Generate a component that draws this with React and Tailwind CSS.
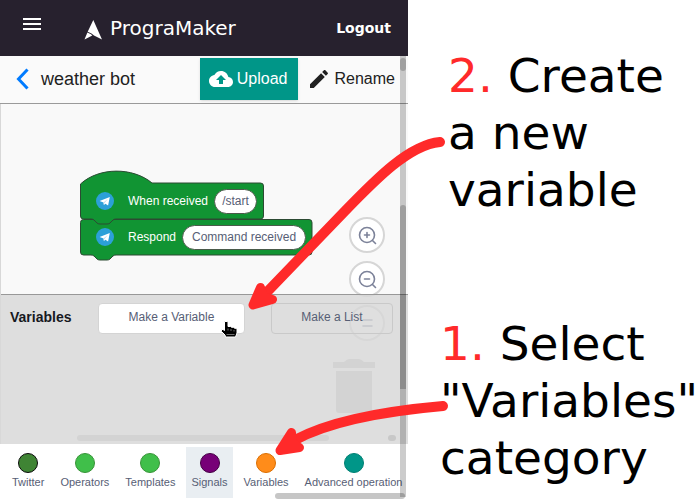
import React from "react";

const SANS = "font-['Liberation_Sans',Arial,sans-serif]";

const categories = [
  { name: "Twitter", dot: "bg-[#3f8434] border-[#0b0b0b]" },
  { name: "Operators", dot: "bg-[#40bf4a] border-[#389438]" },
  { name: "Templates", dot: "bg-[#40bf4a] border-[#389438]" },
  { name: "Signals", dot: "bg-[#770077] border-[#440044]", selected: true },
  { name: "Variables", dot: "bg-[#ff8c1a] border-[#db6e00]" },
  { name: "Advanced operation", dot: "bg-[#009688] border-[#008073]" },
];

function Header() {
  return (
    <header className="flex h-14 shrink-0 items-center bg-[#27212e] pr-[17px] pl-5 font-['DejaVu_Sans',sans-serif] text-white">
      <button aria-label="Menu" className="-mt-2 h-6 w-6">
        <svg viewBox="0 0 24 24" className="h-6 w-6" fill="#fff">
          <path d="M3 6h18v2H3zM3 11h18v2H3zM3 16h18v2H3z" />
        </svg>
      </button>
      <a href="#home" className="ml-10 flex items-center gap-2 text-xl">
        <svg viewBox="0 0 18 20" className="mt-1 h-5 w-[18px]" fill="#fff">
          <path d="M9.300 0 18 19.500 10 15.500 7.500 13.600 3.700 11.800z" />
          <path d="M3.400 12.600 7 14.300 8.300 15.500 0.500 19.600z" />
        </svg>
        PrograMaker
      </a>
      <a href="#logout" className="ml-auto text-sm font-bold">Logout</a>
    </header>
  );
}

function Toolbar() {
  return (
    <div className="flex h-12 shrink-0 items-center border-b border-[#9a9a9a] bg-[#fafafa] pr-[13px] pb-[2px] pl-4 text-[#212121]">
      <button aria-label="Back" className="mr-3 h-6 w-[13px]">
        <svg viewBox="0 0 13 24" className="h-6 w-[13px]" fill="none" stroke="#007bff" strokeWidth="3">
          <path d="M11.500 2.500 2.500 12l9 9.500" />
        </svg>
      </button>
      <h1 className="text-lg">weather bot</h1>
      <button className="ml-auto flex h-[42px] items-center gap-1 bg-[#009688] pr-[10px] pl-[9px] text-base text-white shadow">
        <svg viewBox="0 0 24 24" className="h-6 w-6" fill="#fff">
          <path d="M19.35 10.04C18.67 6.59 15.64 4 12 4 9.11 4 6.6 5.64 5.35 8.04 2.34 8.36 0 10.91 0 14c0 3.31 2.69 6 6 6h13c2.76 0 5-2.24 5-5 0-2.64-2.05-4.78-4.65-4.96zM14 13v4h-4v-4H7l5-5 5 5h-3z" />
        </svg>
        Upload
      </button>
      <button className="ml-[9px] flex h-[42px] items-center gap-1 text-base">
        <svg viewBox="0 0 24 24" className="h-6 w-6" fill="#212121">
          <path d="M3 17.25V21h3.75L17.81 9.94l-3.75-3.75L3 17.25zM20.71 7.04c.39-.39.39-1.02 0-1.41l-2.34-2.34c-.39-.39-1.02-.39-1.41 0l-1.83 1.83 3.75 3.75 1.83-1.83z" />
        </svg>
        Rename
      </button>
    </div>
  );
}

function TelegramIcon() {
  return (
    <svg viewBox="0 0 18 18" className="h-[18px] w-[18px] shrink-0">
      <circle cx="9" cy="9" r="9" fill="#2ca0d8" />
      <path d="M3.6 9 13.8 5 12.1 13.6 9.4 11.7 7.9 13.1 7.5 10.6z" fill="#fff" />
      <path d="M7.5 10.6 12.2 6.6 8.2 11.2 7.9 13.1z" fill="#b8d8ea" />
    </svg>
  );
}

function Block({ label, value, inputWidth }) {
  return (
    <label className="flex h-9 items-center pl-4 text-xs text-white">
      <TelegramIcon />
      <span className="mr-[6px] ml-[14px] whitespace-nowrap">{label}</span>
      <input
        defaultValue={value}
        className={`h-[25px] rounded-full border border-[#4a5a4a] bg-white text-center text-xs text-[#575e75] ${inputWidth}`}
      />
    </label>
  );
}

function Program() {
  return (
    <div className="absolute top-[66px] left-[80px] w-[233px]">
      <svg viewBox="0 0 233 92" className="absolute top-0 left-0 h-[92px] w-[233px]" fill="#119433" stroke="#2c4a33">
        <path d="M.5 52.500a3 3 0 0 1 3-3H229a3 3 0 0 1 3 3V82a3 3 0 0 1-3 3H36q-2 0-3 1l-3 3q-1 1-3 1H20q-2 0-3-1l-3-3q-1-1-3-1H3.500a3 3 0 0 1-3-3z" />
        <path d="M.5 14C19-3 53-3 72 13H180.500a3 3 0 0 1 3 3V46a3 3 0 0 1-3 3H36q-2 0-3 1l-3 3q-1 1-3 1H20q-2 0-3-1l-3-3q-1-1-3-1H3.500a3 3 0 0 1-3-3z" />
      </svg>
      <div className="relative pt-[13px]">
        <Block label="When received" value="/start" inputWidth="w-[43px]" />
        <Block label="Respond" value="Command received" inputWidth="w-[124px]" />
      </div>
    </div>
  );
}

function ZoomButton({ label, children }) {
  return (
    <button aria-label={label} className="h-9 w-9 rounded-full border-2 border-[#d6d6d6] bg-white">
      <svg viewBox="0 0 32 32" className="h-8 w-8" fill="none" stroke="#7c8299" strokeWidth="1.600" strokeLinecap="round">
        {children}
      </svg>
    </button>
  );
}

function CanvasControls() {
  return (
    <div className="absolute top-[113px] right-[23px] flex flex-col items-end gap-2">
      <ZoomButton label="Zoom in">
        <circle cx="16" cy="16" r="7.500" />
        <path d="m21.500 21.500 3 3M16 13.500v5M13.500 16h5" />
      </ZoomButton>
      <ZoomButton label="Zoom out">
        <circle cx="16" cy="16" r="7.500" />
        <path d="m21.500 21.500 3 3M13.500 16h5" />
      </ZoomButton>
      <ZoomButton label="Reset zoom">
        <path d="M12 13h9M12 19h9" />
      </ZoomButton>
      <svg viewBox="0 0 42 54" className="mt-[10px] mr-[10px] h-[54px] w-[42px]" fill="#c4c4c4">
        <path d="M0 3h11q3-3 5-3h10q2 0 5 3h11v6H0zM3 12h36v39q0 3-3 3H6q-3 0-3-3z" />
      </svg>
    </div>
  );
}

function HandCursor() {
  return (
    <svg viewBox="0 0 18 18" className="absolute right-[6px] bottom-[-5px] h-[18px] w-[18px]">
      <path d="M5 1.500h2q1 0 1 1V6.500h2.500l1 .8h2l1 1h1.500q1 .3 1 1.300V13l-1.500 4H5.500L5 15 1.500 11.500V9.500H3l1.500 1V2z" fill="#000" stroke="#fff" strokeWidth="1" />
      <path d="M8 8.500v2M11 9v2M14 10v1.500M6.500 14.500h8" stroke="#bbb" strokeWidth=".6" />
    </svg>
  );
}

function VariablesDrawer() {
  return (
    <section className="relative flex h-[150px] shrink-0 items-start border-t border-[#989898] bg-[#d7d7d7]/80 pt-2 pr-[15px] pl-[9px]">
      <h2 className="w-[88px] shrink-0 pt-1 text-sm font-bold text-[#17191f]">Variables</h2>
      <button className="relative h-[31px] min-w-0 flex-[147] rounded-[4px] border border-[#d4d4d4] bg-white pb-[3px] text-xs text-[#575e75]">
        Make a Variable
        <HandCursor />
      </button>
      <button className="ml-[26px] h-[31px] min-w-0 flex-[122] rounded-[4px] border border-[#c9c9c9] pb-[3px] text-xs text-[#575e75]">
        Make a List
      </button>
      <div className="absolute bottom-[3px] left-[76px] h-[6px] w-[252px] rounded-full bg-[#d3d3d3]" />
      <div className="absolute right-3 bottom-[3px] h-[6px] w-2 rounded-full bg-[#c8c8c8]" />
    </section>
  );
}

function CategoryBar() {
  return (
    <nav className="relative flex h-[55px] shrink-0 gap-[6px] overflow-hidden bg-white pt-[3px] pl-[7px]">
      {categories.map((c) => (
        <button
          key={c.name}
          className={`flex h-[51px] shrink-0 flex-col items-center px-[5px] pt-[6px] text-[11px] leading-[14px] whitespace-nowrap text-[#575e75] ${c.selected ? "bg-[#e9eef2]" : ""}`}
        >
          <span className={`mb-[2px] h-5 w-5 rounded-full border ${c.dot}`} />
          {c.name}
        </button>
      ))}
      <div className="absolute right-[3px] bottom-0 h-[6px] w-[130px] rounded-full bg-[#c6c6c6]" />
    </nav>
  );
}

function Scrollbar() {
  return (
    <div aria-hidden="true" className="absolute top-14 right-[2px] bottom-[2px] z-10 w-[6px] bg-black/20">
      <div className="absolute top-[2px] h-[13px] w-full rounded-full bg-black/20" />
      <div className="absolute top-[149px] h-[184px] w-full rounded-t-full bg-black/20" />
    </div>
  );
}

function Arrows() {
  return (
    <svg viewBox="0 0 450 499" className="pointer-events-none absolute top-0 left-0 z-20 h-[499px] w-[450px]" fill="none" stroke="#ff2a2a" strokeLinecap="round" strokeLinejoin="round">
      <g strokeWidth="10">
        <path d="M440 142C409 145 376 179 345 211L268 291" />
        <path d="M443 406C386 411 332 420 295 440" />
      </g>
      <g strokeWidth="9" fill="#ff2a2a">
        <path d="M260.500 287.500 264 297 272.500 299.500 253 305z" />
        <path d="M291.500 432.500 292 443 299.500 447.500 280 450.500z" />
      </g>
    </svg>
  );
}

export default function App() {
  return (
    <div className="relative flex min-h-screen bg-white">
      <main className={`relative flex min-w-0 flex-1 flex-col ${SANS}`}>
        <Header />
        <Toolbar />
        <div className="relative flex flex-1 flex-col border-l border-[#d8d8d8] bg-[#f9f9f9]">
          <CanvasControls />
          <div className="min-h-[190px] flex-1">
            <div className="absolute top-0 -left-px">
              <Program />
            </div>
          </div>
          <VariablesDrawer />
        </div>
        <CategoryBar />
        <Scrollbar />
      </main>
      <aside className="flex w-[292px] shrink-0 flex-col justify-between pt-[47px] pb-[13px] font-['DejaVu_Sans',sans-serif] text-[47px] leading-[57px] whitespace-nowrap text-black">
        <p className="pl-10">
          <span className="text-[#ff2a2a]">2.</span> Create
          <br />a new
          <br />variable
        </p>
        <p className="pl-8">
          <span className="text-[#ff2a2a]">1.</span> Select
          <br />"Variables"
          <br />category
        </p>
      </aside>
      <Arrows />
    </div>
  );
}
